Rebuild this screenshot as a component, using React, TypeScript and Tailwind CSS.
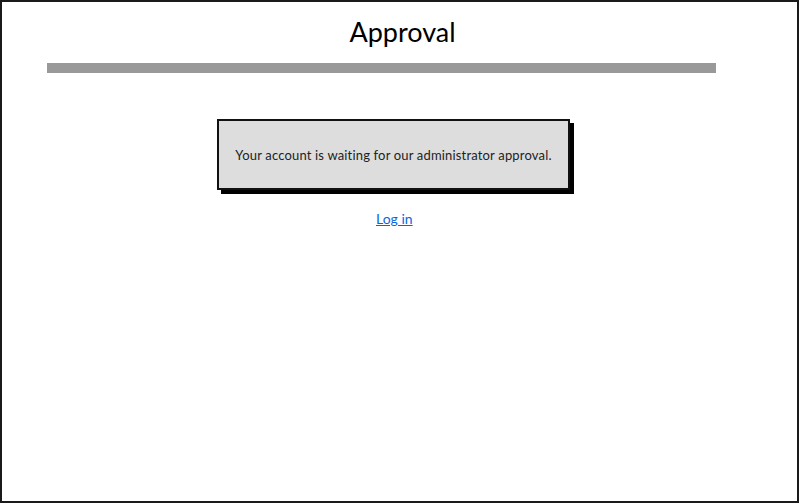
export default function App() {
  return (
    <div className="w-[800px] h-[504px] bg-white">
      <div
        className="w-[799px] h-[503px] border-2 border-[#1a1a1a] bg-white flex flex-col"
        style={{ fontFamily: 'Lato, "Open Sans", sans-serif' }}
      >
        {/* Title */}
        <h1 className="mt-[14px] h-[32px] text-center text-[27px] leading-[32px] text-black pl-[6px]">
          Approval
        </h1>

        {/* Divider bar */}
        <div className="ml-[45px] mt-[15px] h-[10px] w-[669px] bg-[#999999]" />

        {/* Message box */}
        <div className="ml-[215px] mt-[46px] h-[71px] w-[353px] border-2 border-[#111] bg-[#dddddd] shadow-[4px_4px_0_0_#000] flex items-center justify-center">
          <p className="text-[13px] text-[#222] pt-[3px] tracking-[0.17px]">
            Your account is waiting for our administrator approval.
          </p>
        </div>

        {/* Link */}
        <a
          href="#"
          className="mt-[20px] ml-[374px] w-fit text-[14px] leading-[18px] text-[#0a66e0] underline"
        >
          Log in
        </a>
      </div>
    </div>
  );
}
